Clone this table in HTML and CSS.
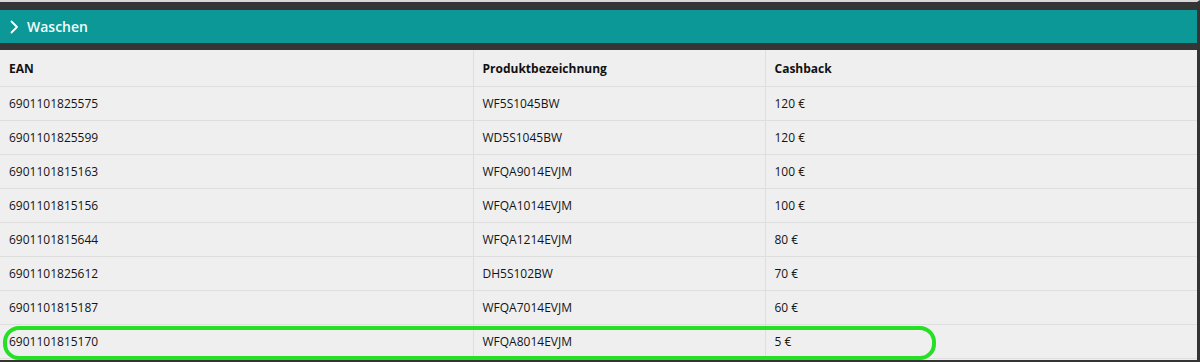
FILE: index.html
```html
<!DOCTYPE html>
<html lang="de">
<head>
<meta charset="utf-8">
<title>Waschen</title>
<link rel="stylesheet" href="styles.css">
</head>
<body>
<div class="frame">
  <div class="panel-head">
    <div class="panel-title">
      <svg class="chev" width="9" height="14" viewBox="0 0 9 14"><path d="M1.5 1.5 L7 7 L1.5 12.5" fill="none" stroke="#fff" stroke-width="1.8" stroke-linecap="round" stroke-linejoin="round"/></svg>
      <span>Waschen</span>
    </div>
  </div>
  <div class="table-wrap">
    <table class="tbl">
      <colgroup><col class="c1"><col class="c2"><col class="c3"></colgroup>
      <thead>
        <tr><th>EAN</th><th>Produktbezeichnung</th><th>Cashback</th></tr>
      </thead>
      <tbody>
        <tr><td>6901101825575</td><td>WF5S1045BW</td><td>120 €</td></tr>
        <tr><td>6901101825599</td><td>WD5S1045BW</td><td>120 €</td></tr>
        <tr><td>6901101815163</td><td>WFQA9014EVJM</td><td>100 €</td></tr>
        <tr><td>6901101815156</td><td>WFQA1014EVJM</td><td>100 €</td></tr>
        <tr><td>6901101815644</td><td>WFQA1214EVJM</td><td>80 €</td></tr>
        <tr><td>6901101825612</td><td>DH5S102BW</td><td>70 €</td></tr>
        <tr><td>6901101815187</td><td>WFQA7014EVJM</td><td>60 €</td></tr>
        <tr><td>6901101815170</td><td>WFQA8014EVJM</td><td>5 €</td></tr>
      </tbody>
    </table>
    <div class="highlight"></div>
  </div>
</div>
</body>
</html>
```
FILE: styles.css
```css
html, body {
  margin: 0;
  padding: 0;
  background: #efefef;
  font-family: "Open Sans", "Lato", sans-serif;
  color: #141414;
}
.frame {
  width: 1200px;
  height: 362px;
  box-sizing: border-box;
  border-top: 2px solid #d8d8d8;
  border-right: 3px solid #343434;
  border-bottom: 2px solid #343434;
  overflow: hidden;
}
.panel-head {
  background: #353535;
  padding: 8px 0 7px 0;
}
.panel-title {
  background: #0c9896;
  height: 33px;
  display: flex;
  align-items: center;
  gap: 8px;
  padding-left: 10px;
  color: #f2fbfb;
  font-size: 14px;
  font-weight: 600;
}
.chev { display: block; }
.table-wrap {
  position: relative;
}
.tbl {
  width: 100%;
  border-collapse: collapse;
  table-layout: fixed;
  font-size: 12px;
}
.c1 { width: 473px; }
.c2 { width: 292px; }
.tbl th, .tbl td {
  text-align: left;
  padding: 0 0 0 9px;
  border-right: 1px solid #dedede;
  border-bottom: 1px solid #dedede;
  white-space: nowrap;
}
.tbl th:last-child, .tbl td:last-child { border-right: none; }
.tbl th {
  height: 36px;
  font-weight: 700;
  color: #111;
}
.tbl td {
  height: 33px;
  font-weight: 500;
}
.highlight {
  position: absolute;
  left: 3px;
  top: 276px;
  width: 925px;
  height: 26px;
  border: 4px solid #25e025;
  border-radius: 16px;
  pointer-events: none;
}
```
